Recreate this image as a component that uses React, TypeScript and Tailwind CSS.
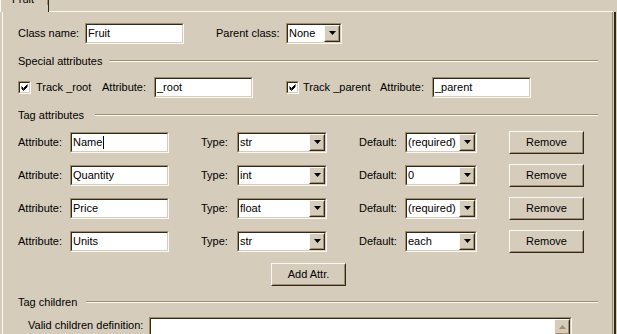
import type { ReactNode } from "react";

type BoxProps = {
  className?: string;
  children?: ReactNode;
};

// classic 3D frame pieces
function Sunken({ className = "", children }: BoxProps) {
  return (
    <div className={`border border-t-[#a28d68] border-l-[#a28d68] border-b-[#fbf9f4] border-r-[#fbf9f4] ${className}`}>
      <div className="h-full w-full border border-t-[#2f2a20] border-l-[#2f2a20] border-b-[#d5ccbb] border-r-[#d5ccbb] bg-white">
        {children}
      </div>
    </div>
  );
}

function Raised({ className = "", children }: BoxProps) {
  return (
    <div className={`border border-t-[#fbf9f4] border-l-[#fbf9f4] border-b-[#2f2a20] border-r-[#2f2a20] ${className}`}>
      <div className="flex h-full w-full items-center justify-center border border-t-[#d5ccbb] border-l-[#d5ccbb] border-b-[#a28d68] border-r-[#a28d68] bg-[#d5ccbb]">
        {children}
      </div>
    </div>
  );
}

function ArrowDown() {
  return (
    <svg width="7" height="4" viewBox="0 0 7 4">
      <polygon points="0,0 7,0 3.5,4" fill="#000" />
    </svg>
  );
}

function TextBox({ width, value, caret }: { width: string; value: string; caret?: boolean }) {
  return (
    <Sunken className={`${width} h-[21px]`}>
      <div className="flex h-full items-center pl-[1px] leading-[13px]">
        <span>{value}</span>
        {caret ? <span className="ml-px h-[13px] w-px bg-black" /> : null}
      </div>
    </Sunken>
  );
}

function Combo({ width, value }: { width: string; value: string }) {
  return (
    <Sunken className={`${width} h-[21px]`}>
      <div className="flex h-full items-center">
        <span className="flex-1 pl-[1px] leading-[13px]">{value}</span>
        <Raised className="h-full w-[16px]">
          <ArrowDown />
        </Raised>
      </div>
    </Sunken>
  );
}

function Checkbox() {
  return (
    <Sunken className="h-[13px] w-[13px]">
      <svg width="9" height="9" viewBox="0 0 9 9" className="block">
        <path d="M1.5 3.5 L3.5 5.5 L7.5 1.5 M1.5 4.5 L3.5 6.5 L7.5 2.5 M1.5 5.5 L3.5 7.5 L7.5 3.5" stroke="#000" strokeWidth="1" fill="none" />
      </svg>
    </Sunken>
  );
}

function Button({ width, label }: { width: string; label: string }) {
  return (
    <Raised className={`${width} h-[23px]`}>
      <span className="leading-[13px]">{label}</span>
    </Raised>
  );
}

function GroupHeader({ label, width }: { label: string; width: string }) {
  return (
    <div className="mt-[8px] flex h-[16px] items-center">
      <span className={`${width} shrink-0`}>{label}</span>
      <div className="h-[2px] flex-1 border-t border-t-[#a28d68] border-b border-b-[#fbf9f4]" />
    </div>
  );
}

const attributes = [
  { name: "Name", type: "str", def: "(required)", caret: true },
  { name: "Quantity", type: "int", def: "0", caret: false },
  { name: "Price", type: "float", def: "(required)", caret: false },
  { name: "Units", type: "str", def: "each", caret: false },
];

export default function App() {
  return (
    <div className="flex h-[334px] w-[617px] flex-col overflow-hidden bg-[#d5ccbb] font-['Liberation_Sans',Arial,sans-serif] text-[11px] text-black">
      <div className="flex h-[12px] shrink-0">
        <div className="h-[12px] w-[49px] overflow-hidden border-l border-l-[#fbf9f4] border-r border-r-[#2f2a20]">
          <div className="h-full border-r border-r-[#a28d68]">
            <div className="-mt-[7px] pl-[11px] leading-[13px]">Fruit</div>
          </div>
        </div>
        <div className="h-[12px] w-[564px] border-b border-b-[#fbf9f4]" />
      </div>

      <div className="ml-[2px] flex w-[614px] flex-1 border-l border-l-[#fbf9f4] border-r-2 border-r-[#2f2a20]">
        <div className="mr-px flex flex-1 border-r border-r-[#a28d68]">
          <div className="flex w-[595px] flex-col pl-[15px] pt-[9px]">
            <div className="flex h-[24px] items-center">
              <span className="w-[67px] shrink-0">Class name:</span>
              <TextBox width="w-[99px]" value="Fruit" />
              <span className="ml-[32px] w-[70px] shrink-0">Parent class:</span>
              <Combo width="w-[56px]" value="None" />
            </div>

            <GroupHeader label="Special attributes" width="w-[91px]" />

            <div className="mt-[6px] flex h-[24px] items-center">
              <Checkbox />
              <span className="ml-[5px] w-[66px] shrink-0">Track _root</span>
              <span className="w-[52px] shrink-0">Attribute:</span>
              <TextBox width="w-[99px]" value="_root" />
              <div className="ml-[33px]">
                <Checkbox />
              </div>
              <span className="ml-[4px] w-[77px] shrink-0">Track _parent</span>
              <span className="w-[52px] shrink-0">Attribute:</span>
              <TextBox width="w-[99px]" value="_parent" />
            </div>

            <GroupHeader label="Tag attributes" width="w-[77px]" />

            <div className="mt-[7px] flex flex-col gap-[9px]">
              {attributes.map((attr) => (
                <div key={attr.name} className="flex h-[24px] items-center">
                  <span className="w-[52px] shrink-0">Attribute:</span>
                  <TextBox width="w-[99px]" value={attr.name} caret={attr.caret} />
                  <span className="ml-[32px] w-[36px] shrink-0">Type:</span>
                  <Combo width="w-[90px]" value={attr.type} />
                  <span className="ml-[32px] w-[46px] shrink-0">Default:</span>
                  <Combo width="w-[72px]" value={attr.def} />
                  <div className="ml-[32px]">
                    <Button width="w-[75px]" label="Remove" />
                  </div>
                </div>
              ))}
            </div>

            <div className="mt-[10px] flex h-[23px]">
              <div className="ml-[253px]">
                <Button width="w-[75px]" label="Add Attr." />
              </div>
            </div>

            <GroupHeader label="Tag children" width="w-[68px]" />

            <div className="mt-[7px] flex items-start">
              <span className="ml-[10px] mt-[2px] w-[121px] shrink-0 leading-[13px]">Valid children definition:</span>
              <Sunken className="h-[60px] w-[423px]">
                <div className="flex h-full justify-end">
                  <div className="flex w-[16px] flex-col bg-[#eeebe3]">
                    <Raised className="h-[16px] w-[16px]">
                      <svg width="7" height="4" viewBox="0 0 7 4">
                        <polygon points="3.5,0 7,4 0,4" fill="#a28d68" />
                      </svg>
                    </Raised>
                  </div>
                </div>
              </Sunken>
            </div>
          </div>
        </div>
      </div>
    </div>
  );
}
